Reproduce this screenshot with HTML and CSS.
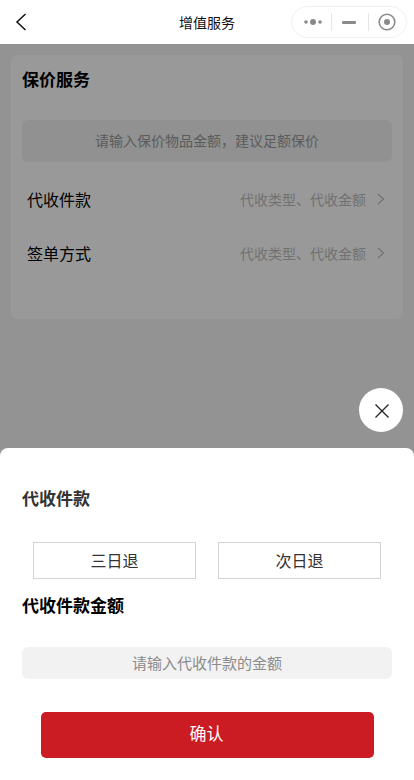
FILE: index.html
```html
<!DOCTYPE html>
<html lang="zh-CN">
<head>
<meta charset="utf-8">
<title>增值服务</title>
<link rel="stylesheet" href="styles.css">
</head>
<body>
<div class="page">
  <header class="nav">
    <svg class="nav-back" width="12" height="18" viewBox="0 0 12 18"><path d="M10.5 1 L2 9 L10.5 17" fill="none" stroke="#111" stroke-width="1.5"/></svg>
    <div class="nav-title">增值服务</div>
    <div class="capsule">
      <svg class="cap-icon" width="20" height="8" viewBox="0 0 20 8"><circle cx="3" cy="4" r="1.8" fill="#8a8a8a"/><circle cx="10" cy="4" r="3" fill="#8a8a8a"/><circle cx="17" cy="4" r="1.8" fill="#8a8a8a"/></svg>
      <span class="cap-sep cap-sep-first"></span>
      <span class="cap-minus"></span>
      <span class="cap-sep cap-sep-last"></span>
      <svg class="cap-icon" width="18" height="18" viewBox="0 0 18 18"><circle cx="9" cy="9" r="7.8" fill="none" stroke="#8a8a8a" stroke-width="1.6"/><circle cx="9" cy="9" r="3" fill="#8a8a8a"/></svg>
    </div>
  </header>
  <main class="content">
    <section class="card">
      <h2 class="heading">保价服务</h2>
      <div class="field field-top">请输入保价物品金额，建议足额保价</div>
      <div class="row">
        <span class="row-label">代收件款</span>
        <span class="row-value">代收类型、代收金额
          <svg width="8" height="12" viewBox="0 0 8 12"><path d="M1 1 L6.5 6 L1 11" fill="none" stroke="#bbb" stroke-width="1.1"/></svg>
        </span>
      </div>
      <div class="row">
        <span class="row-label">签单方式</span>
        <span class="row-value">代收类型、代收金额
          <svg width="8" height="12" viewBox="0 0 8 12"><path d="M1 1 L6.5 6 L1 11" fill="none" stroke="#bbb" stroke-width="1.1"/></svg>
        </span>
      </div>
    </section>
    <div class="mask"></div>
  </main>
  <div class="close">
    <svg width="14" height="14" viewBox="0 0 14 14"><path d="M0.5 0.5 L13.5 13.5 M13.5 0.5 L0.5 13.5" fill="none" stroke="#222" stroke-width="1.3"/></svg>
  </div>
  <section class="sheet">
    <h2 class="heading heading-soft">代收件款</h2>
    <div class="options">
      <div class="option">三日退</div>
      <div class="option">次日退</div>
    </div>
    <h2 class="heading heading-amount">代收件款金额</h2>
    <div class="field field-amount">请输入代收件款的金额</div>
    <button class="confirm">确认</button>
  </section>
</div>
</body>
</html>
```
FILE: styles.css
```css
* { box-sizing: border-box; }
html, body { margin: 0; padding: 0; }
body {
  font-family: "Noto Sans CJK SC", "Noto Sans", sans-serif;
  color: #000;
  background: #f5f5f5;
}
.page {
  position: relative;
  width: 414px;
  height: 780px;
  overflow: hidden;
  display: flex;
  flex-direction: column;
}
.nav {
  position: relative;
  height: 44px;
  flex: none;
  background: #fff;
  display: flex;
  align-items: center;
  justify-content: center;
}
.nav-back { position: absolute; left: 15px; top: 13px; }
.nav-title { font-size: 14px; line-height: 20px; color: #111; margin-top: -1px; }
.capsule {
  position: absolute;
  left: 291px;
  top: 6px;
  width: 116px;
  height: 32px;
  border: 1px solid #f1f1f1;
  border-radius: 16px;
  display: flex;
  align-items: center;
  padding-left: 11px;
}
.cap-icon { flex: none; }
.cap-sep { width: 1px; height: 18px; background: #e6e6e6; flex: none; }
.cap-sep-first { margin: 0 10px 0 8px; }
.cap-sep-last { margin: 0 9px 0 12px; }
.cap-minus { width: 14px; height: 3px; background: #8a8a8a; border-radius: 1px; flex: none; }
.content { position: relative; flex: 1; padding: 11px; }
.mask { position: absolute; inset: 0; background: rgba(0, 0, 0, 0.4); }
.card {
  height: 264px;
  background: #fff;
  border-radius: 6px;
  padding: 10px 11px 0;
}
.heading { margin: 0; font-size: 17px; line-height: 28px; font-weight: 700; color: #000; }
.field {
  background: #f2f2f2;
  border-radius: 6px;
  display: flex;
  align-items: center;
  justify-content: center;
  padding-bottom: 2px;
}
.field-top { height: 42px; margin-top: 27px; font-size: 14px; color: #999; }
.row {
  display: flex;
  justify-content: space-between;
  align-items: center;
  height: 54px;
  padding: 0 7px 2px 5px;
}
.field-top + .row { margin-top: 11px; }
.row-label { font-size: 16px; color: #000; }
.row-value { display: flex; align-items: center; gap: 11px; font-size: 14px; color: #bdbdbd; }
.close {
  position: absolute;
  left: 359px;
  top: 388px;
  width: 44px;
  height: 44px;
  padding: 1px 0 0 1px;
  background: #fff;
  border-radius: 50%;
  display: flex;
  align-items: center;
  justify-content: center;
}
.sheet {
  position: absolute;
  left: 0;
  right: 0;
  bottom: 0;
  height: 332px;
  background: #fff;
  border-radius: 8px 8px 0 0;
  padding: 36px 22px 0;
}
.heading-soft { color: #333; }
.options { display: flex; justify-content: space-between; padding: 0 11px; margin-top: 30px; }
.option {
  width: 163px;
  height: 37px;
  border: 1px solid #d4d4d4;
  display: flex;
  align-items: center;
  justify-content: center;
  font-size: 16px;
  color: #333;
  padding-bottom: 2px;
}
.heading-amount { margin-top: 12px; }
.field-amount { height: 32px; margin-top: 28px; font-size: 15px; color: #8c8c8c; }
.confirm {
  display: block;
  width: 333px;
  height: 46px;
  margin: 33px 0 0 19px;
  border: 0;
  border-radius: 5px;
  padding: 0 2px 5px 0;
  background: #cb1b23;
  color: #fff;
  font: inherit;
  font-size: 17px;
}
```
